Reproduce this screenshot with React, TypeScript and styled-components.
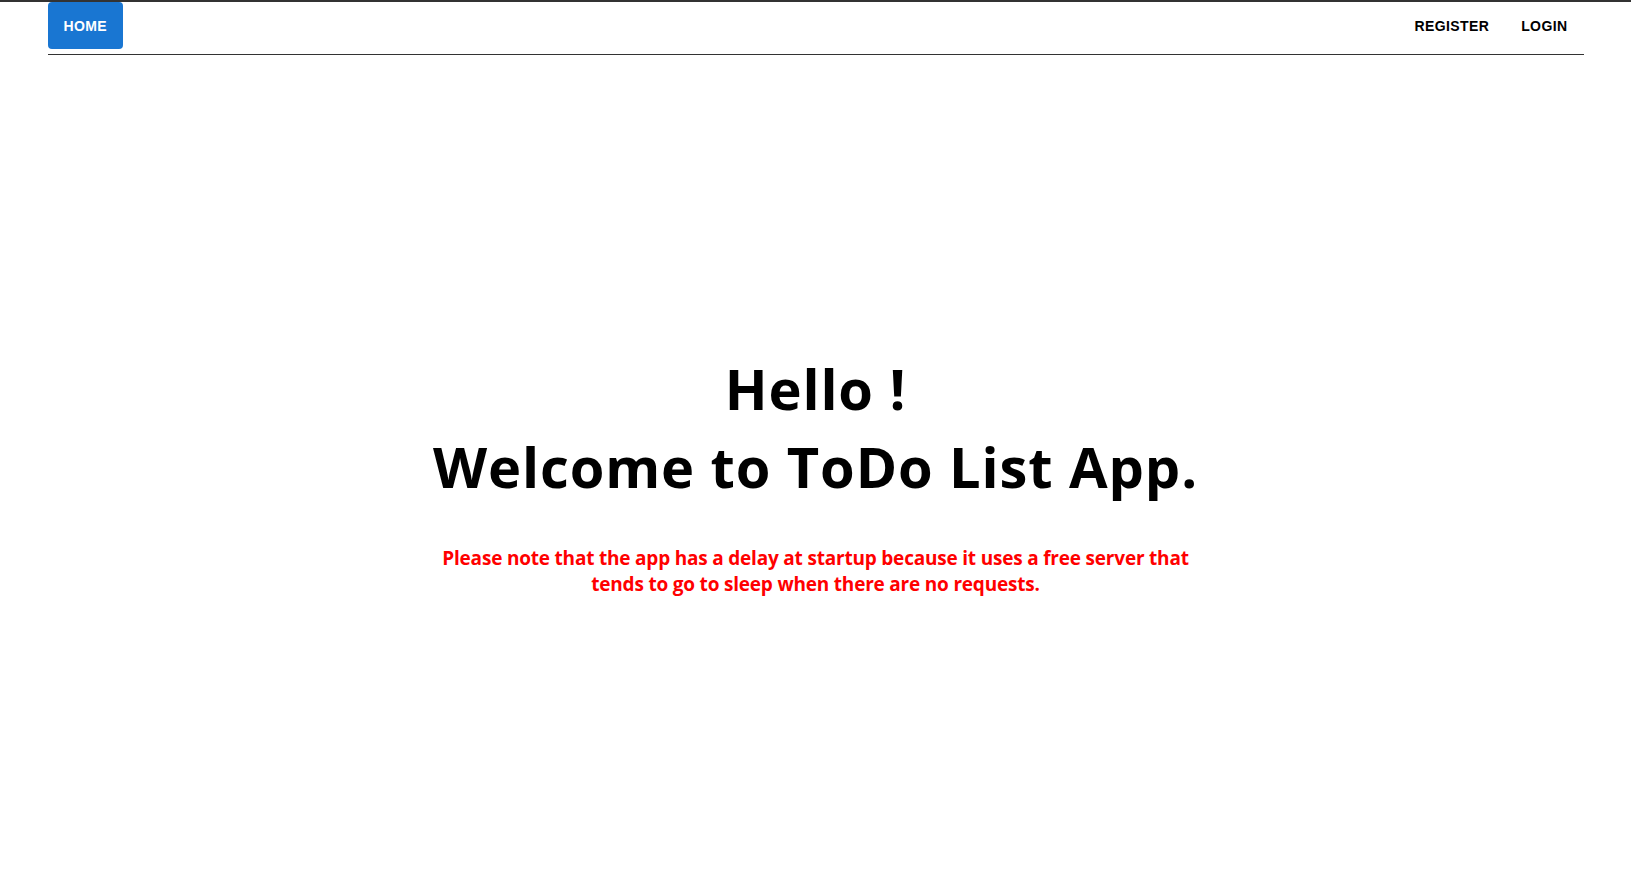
import React from "react";
import styled, { createGlobalStyle } from "styled-components";

const GlobalStyle = createGlobalStyle`
  html, body {
    margin: 0;
    padding: 0;
    background: #ffffff;
  }
  body {
    border-top: 2px solid #333333;
    font-family: "Liberation Sans", Arial, sans-serif;
  }
`;

const Header = styled.header`
  max-width: 1536px;
  margin: 0 auto;
  display: flex;
  justify-content: space-between;
  align-items: flex-start;
  height: 53px;
  border-bottom: 1px solid #333333;
  box-sizing: border-box;
`;

const NavGroup = styled.nav`
  display: flex;
  align-items: center;
`;

const NavButton = styled.a<{ active?: boolean }>`
  display: inline-flex;
  align-items: center;
  justify-content: center;
  height: 47px;
  padding: 0 16px;
  box-sizing: border-box;
  border-radius: 4px;
  font-family: "Liberation Sans", Arial, sans-serif;
  font-size: 14px;
  font-weight: 700;
  letter-spacing: 0.02857em;
  text-transform: uppercase;
  text-decoration: none;
  cursor: pointer;
  color: ${({ active }) => (active ? "#ffffff" : "#000000")};
  background-color: ${({ active }) => (active ? "#1976d2" : "transparent")};
`;

const Main = styled.main`
  min-height: calc(100vh - 55px);
  display: flex;
  flex-direction: column;
  align-items: center;
  justify-content: center;
  padding-top: 14px;
  box-sizing: border-box;
`;

const Title = styled.h1`
  margin: 0;
  font-family: "Open Sans", "Noto Sans", sans-serif;
  font-size: 56px;
  font-weight: 700;
  line-height: 78px;
  letter-spacing: 0.9px;
  text-align: center;
  color: #000000;
`;

const Note = styled.p`
  margin: 40px 0 0;
  max-width: 790px;
  font-family: "Open Sans", "Noto Sans", sans-serif;
  font-size: 19px;
  font-weight: 700;
  line-height: 26px;
  letter-spacing: -0.2px;
  text-align: center;
  color: #ff0000;
`;

function App() {
  return (
    <>
      <GlobalStyle />
      <Header>
        <NavButton active>Home</NavButton>
        <NavGroup>
          <NavButton>Register</NavButton>
          <NavButton>Login</NavButton>
        </NavGroup>
      </Header>
      <Main>
        <Title>
          Hello !
          <br />
          Welcome to ToDo List App.
        </Title>
        <Note>
          Please note that the app has a delay at startup because it uses a
          free server that tends to go to sleep when there are no requests.
        </Note>
      </Main>
    </>
  );
}

export default App;
